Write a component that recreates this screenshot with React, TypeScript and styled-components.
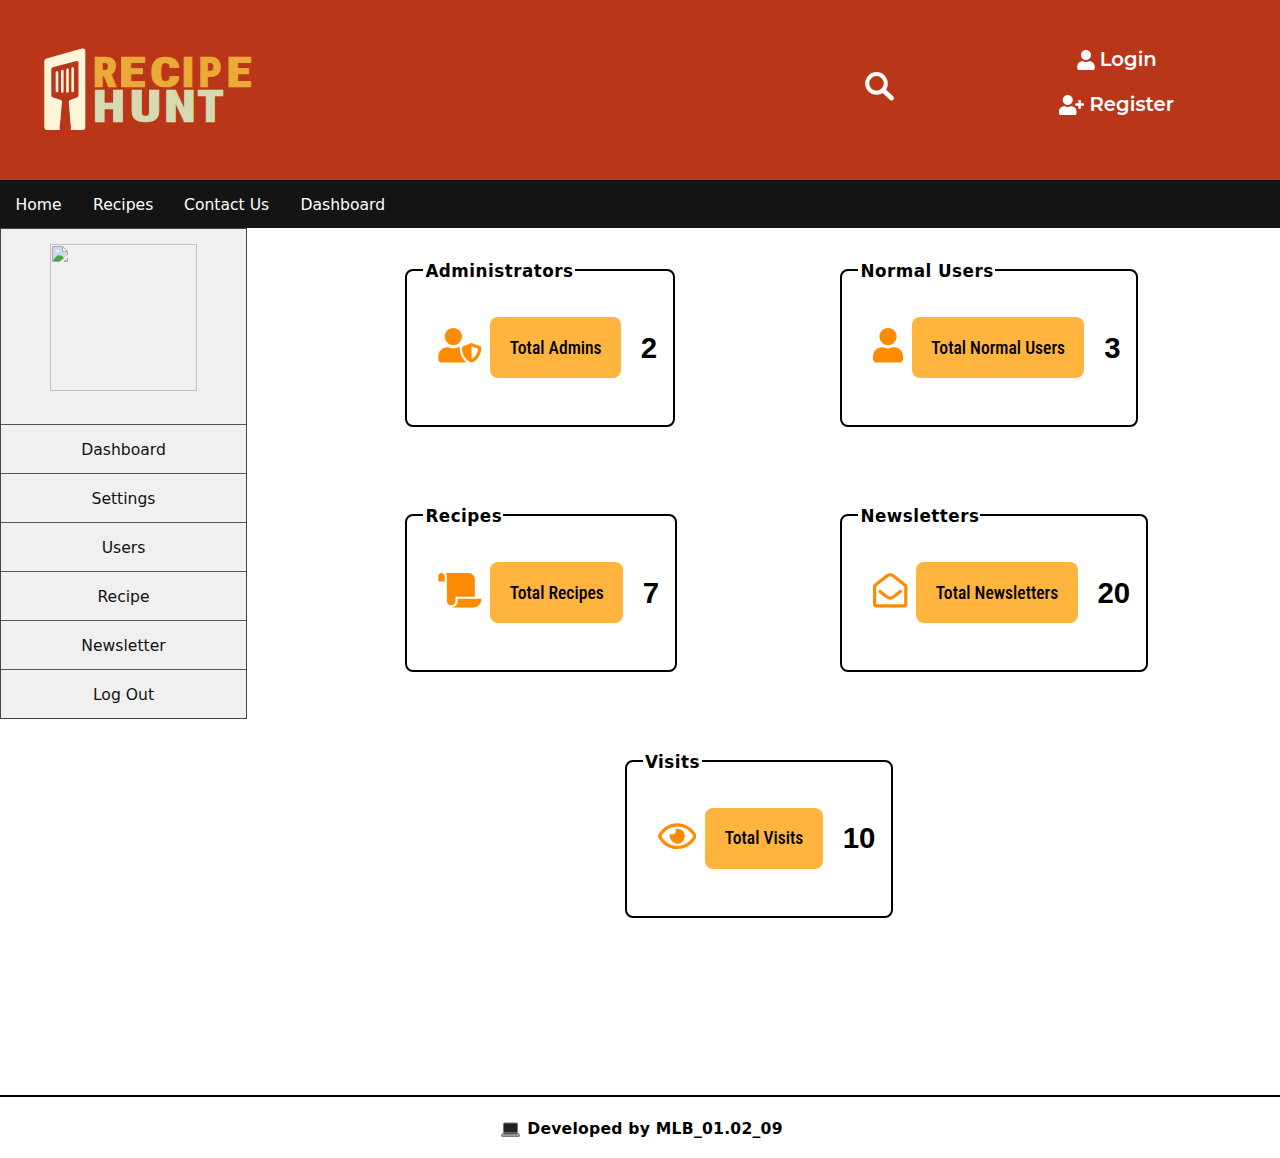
import React from "react";
import styled, { createGlobalStyle } from "styled-components";
import { FaUser, FaUserPlus, FaUserShield, FaScroll, FaRegEnvelopeOpen, FaRegEye } from "react-icons/fa";

const GlobalStyle = createGlobalStyle`
  *, *::before, *::after { box-sizing: border-box; }
  body { margin: 0; background: #fff; color: #000; font-family: Verdana, "DejaVu Sans", sans-serif; font-size: 15.6px; }
  svg { display: block; flex: none; }
`;

const Page = styled.div`
  display: flex;
  flex-direction: column;
  height: 1158px;
  overflow: hidden;
`;

const Header = styled.header`
  height: 180px;
  flex: none;
  background: #b93619;
  color: #fff;
  display: grid;
  grid-template-columns: 865px 93px 1fr;
  align-items: start;
`;

const LogoBox = styled.div`
  padding: 45px 0 0 40px;
`;

const SearchButton = styled.div`
  padding-top: 72px;
`;

const Account = styled.div`
  display: flex;
  flex-direction: column;
  align-items: center;
  gap: 21px;
  padding: 47.5px 4.5px 0 0;
`;

const AccountLink = styled.a`
  display: flex;
  align-items: center;
  gap: 5px;
  height: 24px;
  font: 600 19.6px/23px Montserrat, Inter, sans-serif;
  letter-spacing: 0.05px;
`;

const IconSlot = styled.span<{ $width: number; $height: number }>`
  flex: none;
  svg { width: ${(p) => p.$width}px; height: ${(p) => p.$height}px; }
`;

const Nav = styled.nav`
  height: 48px;
  flex: none;
  background: #141414;
  color: #fff;
  display: flex;
  align-items: center;
  gap: 31px;
  padding: 1px 15.5px 0;
`;

const NavLink = styled.a<{ $width: number }>`
  width: ${(p) => p.$width}px;
  white-space: nowrap;
`;

const Body = styled.div`
  display: flex;
  flex: 1;
`;

const Sidebar = styled.aside`
  width: 247px;
  height: 491px;
  background: #f0f0f0;
  border: 1px solid #444;
`;

const Profile = styled.div`
  height: 195px;
  display: flex;
  justify-content: center;
  padding-top: 15px;
`;

const Avatar = styled.div`
  width: 147px;
  height: 147px;
  border: 1px solid #c0c0c0;
  padding: 1px;
`;

const SideLink = styled.a`
  display: flex;
  align-items: center;
  justify-content: center;
  height: 49px;
  padding-top: 1px;
  border-top: 1px solid #555;
  color: #111;
`;

const Main = styled.main`
  flex: 1;
  padding: 32px 0 0 158.4px;
`;

const Cards = styled.div`
  display: grid;
  grid-template-columns: 435px 1fr;
  row-gap: 78px;
  justify-items: start;
`;

const Centered = styled.div`
  display: flex;
  padding: 78.5px 0 0 219.5px;
`;

const Card = styled.fieldset`
  margin: 0;
  min-width: 0;
  height: 167px;
  border: 2px solid #000;
  border-radius: 8px;
  padding: 0 15.8px 0 16px;
`;

const Title = styled.legend<{ $width: number }>`
  padding: 0 2px;
  width: ${(p) => p.$width}px;
  height: 20px;
  white-space: nowrap;
  font-weight: 700;
  font-size: 16.8px;
  letter-spacing: 0.48px;
  line-height: 22px;
`;

const CardRow = styled.div`
  display: flex;
  align-items: center;
  padding: 37px 0 0 14.9px;
`;

const StatIcon = styled(IconSlot)`
  margin: 0 8.6px 4px 0;
  color: #ff8c00;
`;

const Label = styled.div<{ $width: number }>`
  width: ${(p) => p.$width}px;
  height: 61px;
  display: flex;
  align-items: center;
  justify-content: center;
  border-radius: 8px;
  background: #ffb43e;
  white-space: nowrap;
  font: 500 17.6px "Roboto Condensed", Roboto, sans-serif;
`;

const Count = styled.span`
  margin-left: 19.7px;
  font: 700 29.4px "Liberation Sans", Arial, sans-serif;
`;

const Footer = styled.footer`
  flex: none;
  height: 63px;
  border-top: 2px solid #000;
  display: flex;
  justify-content: center;
  gap: 7px;
  padding: 22px 0 0 4px;
  font-weight: 700;
  font-size: 15.6px;
  letter-spacing: 0.25px;
  line-height: 20px;
`;

const recipeLetters = [
  { char: "R", x: 93, width: 24.3 },
  { char: "E", x: 119, width: 26.8 },
  { char: "C", x: 149.9, width: 30 },
  { char: "I", x: 181.6, width: 13 },
  { char: "P", x: 198.7, width: 23.3 },
  { char: "E", x: 226.4, width: 25.2 },
];
const huntLetters = [
  { char: "H", x: 92.7, width: 32.2 },
  { char: "U", x: 129.4, width: 32 },
  { char: "N", x: 164.2, width: 31.4 },
  { char: "T", x: 196.9, width: 27 },
];

const LogoWord = ({ letters, y, size, color }: { letters: typeof recipeLetters; y: number; size: number; color: string }) => (
  <text y={y} fontSize={size} fill={color} stroke={color} strokeWidth="0.7">
    {letters.map((l, i) => (
      <tspan key={i} x={l.x} textLength={l.width} lengthAdjust="spacingAndGlyphs">{l.char}</tspan>
    ))}
  </text>
);

const Logo = () => (
  <svg width="215" height="90" viewBox="40 45 215 90">
    <path d="M46.500 58.500 82 48.600q3.300-.8 3.300 2.600V127q0 3-3 3H47.300q-3 0-3-3V61.500q0-2.300 2.200-3Z" fill="#fff5d8" />
    <path d="M52.800 67.300 76.500 61q2-.5 2 1.500V95.500q0 1.200-1.200 1.700L70 100q-1.200.5-1.200 2L70.500 124q.8 2 .2 6H59.800q-.6-3 .3-7L62 102q0-1.500-1.200-2L52.500 97.200q-1.200-.5-1.200-1.700V69.300q0-1.500 1.500-2Z" fill="#b93619" />
    <path d="M57 72.500V91M62.300 71V91.500M67.500 69.800V91.500M72.700 68.500V91" stroke="#fff5d8" strokeWidth="2.600" strokeLinecap="round" />
    <g fontFamily="Roboto Condensed, Roboto, sans-serif" fontWeight="900">
      <LogoWord letters={recipeLetters} y={87.4} size={42.6} color="#eba937" />
      <LogoWord letters={huntLetters} y={122} size={44.4} color="#d5dab1" />
    </g>
  </svg>
);

const SearchIcon = () => (
  <svg width="30" height="30" viewBox="0 0 30 30" fill="none" stroke="#fff">
    <circle cx="11.500" cy="11.400" r="9.300" strokeWidth="4" />
    <path d="M18.500 18.400 26.500 26" strokeWidth="4.800" strokeLinecap="round" />
  </svg>
);

const BrokenImage = () => (
  <svg width="16" height="16" viewBox="0 0 16 16">
    <path d="M.5.500h10L15.500 5.500v10H.500Z" fill="#c6d9f1" stroke="#a8a8a8" />
    <path d="M10.500.500v5h5Z" fill="#fff" stroke="#a8a8a8" />
    <path d="M3 5.500q0-1 1.200-1 1-1.500 2.500 0 1.300 0 1.300 1Z" fill="#fff" />
    <path d="M1 15Q4 9 7.500 9.200 10 9.500 12 12L14 15Z" fill="#4ea63b" />
    <path d="M7.500 16 16 8.500V11.500L11 16Z" fill="#f0f0f0" />
  </svg>
);

const Laptop = () => (
  <svg width="19" height="20" viewBox="0 0 19 20">
    <rect x="2.500" y="4" width="14" height="9.500" rx="1" fill="#222" stroke="#777" />
    <path d="M2.500 13.500h14l2 2.500v.700q0 .8-1 .8h-16q-1 0-1-.8V16Z" fill="#999" stroke="#555" strokeWidth=".7" />
    <path d="M3 14.700h13" stroke="#444" />
  </svg>
);

const navigation = [
  { text: "Home", width: 46.5 },
  { text: "Recipes", width: 60 },
  { text: "Contact Us", width: 85.5 },
  { text: "Dashboard", width: 85 },
];
const sections = ["Dashboard", "Settings", "Users", "Recipe", "Newsletter", "Log Out"];
const stats = [
  { title: "Administrators", titleWidth: 152, label: "Total Admins", width: 130.5, count: 2, Icon: FaUserShield, iconWidth: 43.6 },
  { title: "Normal Users", titleWidth: 137, label: "Total Normal Users", width: 172.5, count: 3, Icon: FaUser, iconWidth: 30.1 },
  { title: "Recipes", titleWidth: 80, label: "Total Recipes", width: 132.5, count: 7, Icon: FaScroll, iconWidth: 43.6 },
  { title: "Newsletters", titleWidth: 122, label: "Total Newsletters", width: 161.5, count: 20, Icon: FaRegEnvelopeOpen, iconWidth: 34.4 },
];
const visits = { title: "Visits", titleWidth: 59, label: "Total Visits", width: 118, count: 10, Icon: FaRegEye, iconWidth: 38.7 };

const StatCard = ({ title, titleWidth, label, width, count, Icon, iconWidth }: typeof visits) => (
  <Card>
    <Title $width={titleWidth}>{title}</Title>
    <CardRow>
      <StatIcon $width={iconWidth} $height={34.4}><Icon /></StatIcon>
      <Label $width={width}>{label}</Label>
      <Count>{count}</Count>
    </CardRow>
  </Card>
);

export default function App() {
  return (
    <Page>
      <GlobalStyle />
      <Header>
        <LogoBox><Logo /></LogoBox>
        <SearchButton><SearchIcon /></SearchButton>
        <Account>
          <AccountLink><IconSlot $width={18} $height={20}><FaUser /></IconSlot>Login</AccountLink>
          <AccountLink><IconSlot $width={25} $height={20}><FaUserPlus /></IconSlot>Register</AccountLink>
        </Account>
      </Header>
      <Nav>
        {navigation.map((n) => <NavLink key={n.text} $width={n.width}>{n.text}</NavLink>)}
      </Nav>
      <Body>
        <Sidebar>
          <Profile><Avatar><BrokenImage /></Avatar></Profile>
          {sections.map((s) => <SideLink key={s}>{s}</SideLink>)}
        </Sidebar>
        <Main>
          <Cards>
            {stats.map((s) => <StatCard key={s.title} {...s} />)}
          </Cards>
          <Centered><StatCard {...visits} /></Centered>
        </Main>
      </Body>
      <Footer><Laptop />Developed by MLB_01.02_09</Footer>
    </Page>
  );
}
